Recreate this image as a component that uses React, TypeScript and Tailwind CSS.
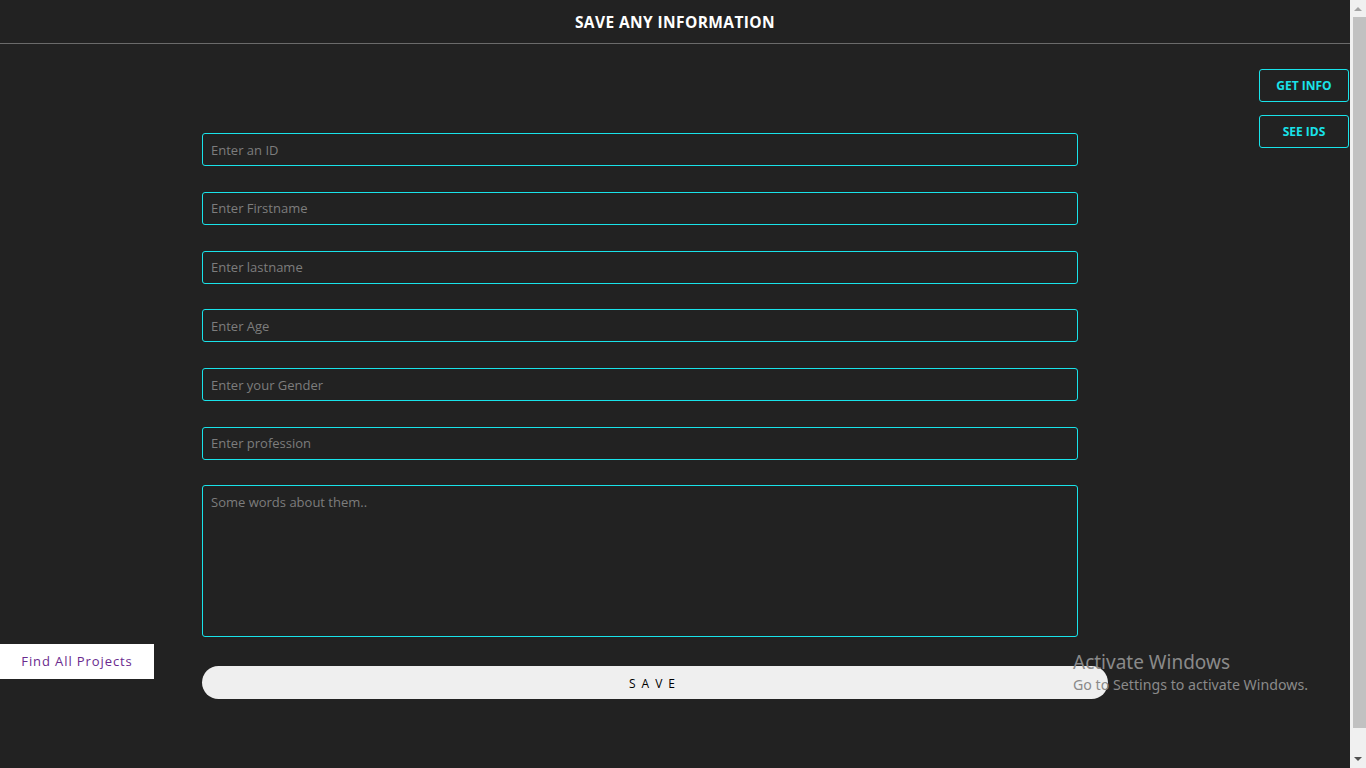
import React from 'react'

const fields = [
    'Enter an ID',
    'Enter Firstname',
    'Enter lastname',
    'Enter Age',
    'Enter your Gender',
    'Enter profession',
]

const font = { fontFamily: '"Open Sans", "Noto Sans", sans-serif' }

const ScrollBar = () => (
    <div className="w-[16px] h-screen bg-[#f0f0f0] flex flex-col items-center shrink-0">
        <div className="h-[17px] flex items-center justify-center">
            <svg width="8" height="5" viewBox="0 0 8 5"><path d="M0 5 L4 1 L8 5 Z" fill="#a3a3a3" /></svg>
        </div>
        <div className="w-[13px] flex-1 bg-[#c1c1c1] ml-[2px]" />
        <div className="h-[40px] flex items-end justify-center pb-[6px]">
            <svg width="8" height="5" viewBox="0 0 8 5"><path d="M0 0 L4 4 L8 0 Z" fill="#505050" /></svg>
        </div>
    </div>
)

export default function App() {
    return (
        <div className="flex w-[1366px] h-screen overflow-hidden bg-[#222222]" style={font}>
            <div className="relative flex-1 flex flex-col">
                {/* Header */}
                <div className="h-[44px] border-b border-[#6b6b6b] flex items-center justify-center">
                    <h1 className="text-white text-[15.5px] font-bold tracking-[0.4px] mt-[2px]">SAVE ANY INFORMATION</h1>
                </div>

                <div className="flex items-start">
                    {/* Form */}
                    <form className="ml-[202px] mt-[89px] w-[906px] flex flex-col">
                        {fields.map((f) => (
                            <input
                                key={f}
                                placeholder={f}
                                className="w-[876px] h-[33px] mb-[25.8px] bg-transparent border border-[#19e3ea] rounded-[3px] px-[8px] text-[13px] text-white placeholder:text-[#7d7d7d] outline-none"
                            />
                        ))}
                        <textarea
                            placeholder="Some words about them.."
                            className="w-[876px] h-[152px] -mt-[1px] bg-transparent border border-[#19e3ea] rounded-[3px] px-[8px] py-[7px] text-[13px] text-white placeholder:text-[#7d7d7d] outline-none resize-none"
                        />
                        <button
                            type="button"
                            className="mt-[29px] w-[906px] h-[33px] pt-[3px] rounded-full bg-[#efefef] text-[12px] text-black tracking-[6px] flex items-center justify-center"
                        >
                            SAVE
                        </button>
                    </form>

                    {/* Side buttons */}
                    <div className="ml-auto mr-[1px] mt-[25px] flex flex-col gap-[13px]">
                        <button className="w-[90px] h-[33px] border border-[#19e3ea] rounded-[3px] text-[#19e3ea] text-[12px] font-bold">GET INFO</button>
                        <button className="w-[90px] h-[33px] border border-[#19e3ea] rounded-[3px] text-[#19e3ea] text-[12px] font-bold">SEE IDS</button>
                    </div>
                </div>

                {/* Floating link */}
                <button className="absolute left-0 top-[644px] w-[154px] h-[35px] bg-white text-[#6a2a8e] text-[13px] tracking-[0.9px] flex items-center justify-center">
                    Find All Projects
                </button>

                {/* Windows watermark */}
                <div className="absolute left-[1073px] top-[650px] text-[#8a8a8a] pointer-events-none whitespace-nowrap" style={{ fontFamily: '"Noto Sans", "Open Sans", sans-serif' }}>
                    <div className="text-[19px] leading-[24px]">Activate Windows</div>
                    <div className="text-[14.2px] leading-[22px]">Go to Settings to activate Windows.</div>
                </div>
            </div>
            <ScrollBar />
        </div>
    )
}
